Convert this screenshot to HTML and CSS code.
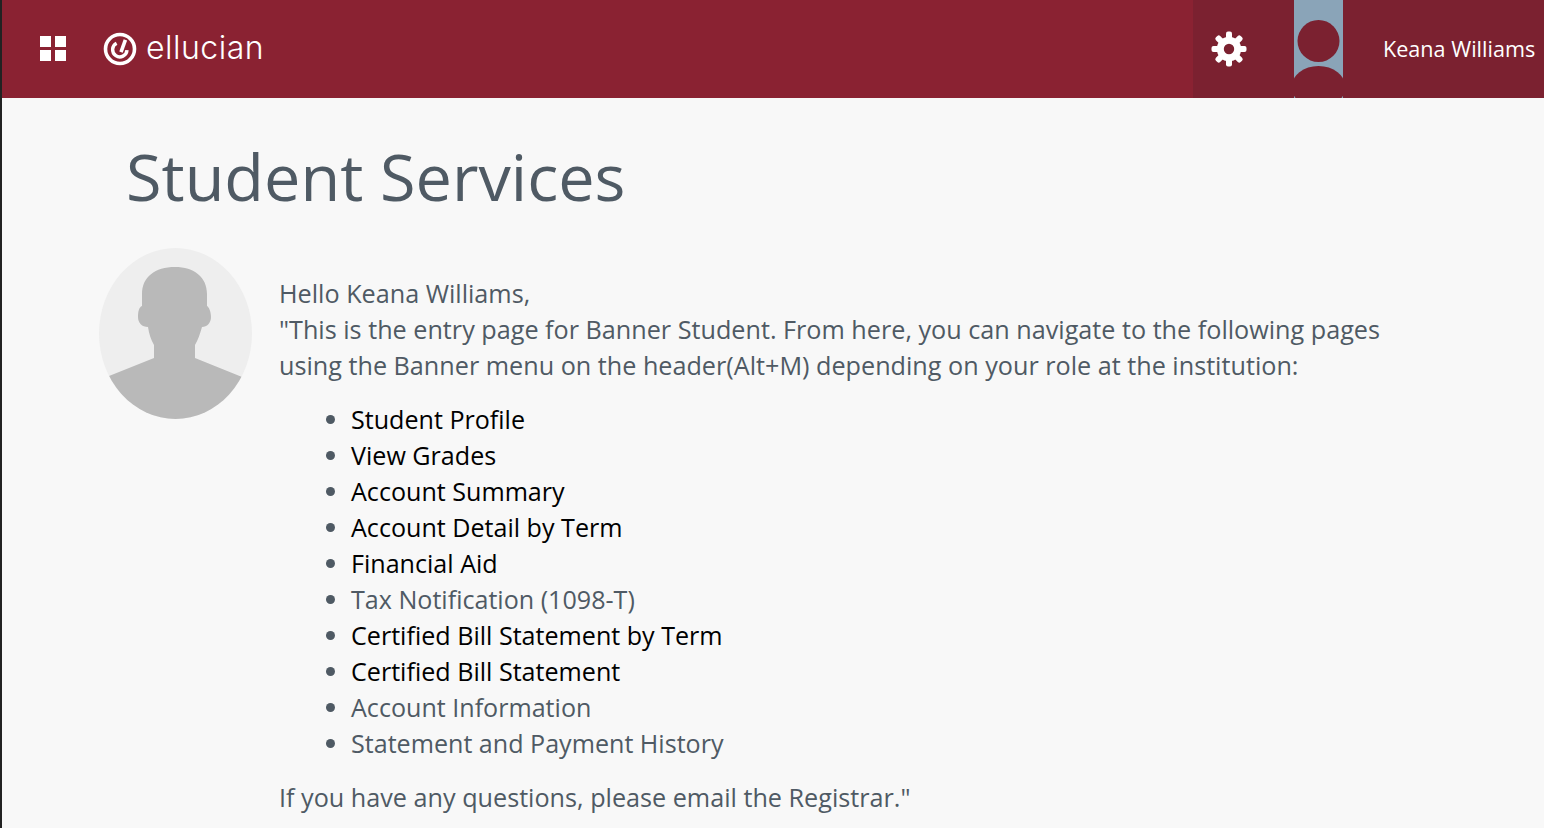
FILE: index.html
```html
<!DOCTYPE html>
<html lang="en">
<head>
    <meta charset="UTF-8" />
    <title>Student Services</title>
    <link rel="stylesheet" href="styles.css">
</head>
<body>
<header class="topbar">
    <div class="topbar-left">
        <svg class="menu-icon" viewBox="0 0 26 26" width="26" height="26">
            <rect x="0" y="0" width="11" height="11" />
            <rect x="15" y="0" width="11" height="11" />
            <rect x="0" y="14" width="11" height="11" />
            <rect x="15" y="14" width="11" height="11" />
        </svg>
        <div class="logo">
            <svg class="logo-mark" viewBox="0 0 34 34" width="34" height="34">
                <circle cx="17" cy="17" r="14.5" fill="none" stroke="#fff" stroke-width="3.6" />
                <path d="M13.6 11.2a7.2 7.2 0 1 0 10.4 7" fill="none" stroke="#fff" stroke-width="3.4" />
                <path d="M22.4 7.8l-4.4 12.4" fill="none" stroke="#fff" stroke-width="3.6" />
            </svg>
            <span class="logo-text">ellucian</span>
        </div>
    </div>
    <div class="topbar-right">
        <button class="gear-btn" aria-label="Settings">
            <svg class="gear" viewBox="0 0 36 36" width="36" height="36">
                <circle class="gear-ring" cx="18" cy="18" r="8.7" />
                <rect x="15" y="0.5" width="6" height="9" rx="2" />
                <rect x="15" y="0.5" width="6" height="9" rx="2" transform="rotate(45 18 18)" />
                <rect x="15" y="0.5" width="6" height="9" rx="2" transform="rotate(90 18 18)" />
                <rect x="15" y="0.5" width="6" height="9" rx="2" transform="rotate(135 18 18)" />
                <rect x="15" y="0.5" width="6" height="9" rx="2" transform="rotate(180 18 18)" />
                <rect x="15" y="0.5" width="6" height="9" rx="2" transform="rotate(225 18 18)" />
                <rect x="15" y="0.5" width="6" height="9" rx="2" transform="rotate(270 18 18)" />
                <rect x="15" y="0.5" width="6" height="9" rx="2" transform="rotate(315 18 18)" />
            </svg>
        </button>
        <svg class="user-tile" viewBox="0 0 49 98" width="49" height="98">
            <rect width="49" height="98" fill="#8aa4b8" />
            <circle cx="24.5" cy="41" r="21" fill="#7b2130" />
            <ellipse cx="24.5" cy="87" rx="27" ry="21" fill="#7b2130" />
        </svg>
        <span class="user-name">Keana Williams</span>
    </div>
</header>

<main class="page">
    <h1>Student Services</h1>
    <div class="welcome">
        <svg class="profile-pic" viewBox="0 0 153 171" width="153" height="171">
            <defs>
                <clipPath id="pic-clip">
                    <ellipse cx="76.5" cy="85.5" rx="76.5" ry="85.5" />
                </clipPath>
            </defs>
            <ellipse cx="76.5" cy="85.5" rx="76.5" ry="85.5" fill="#eeeeee" />
            <path clip-path="url(#pic-clip)" fill="#b9b9b9" d="M76 19C56 19 43 29 43 46V58C40 59 39 64 39 69C39 75 43 79 49 79C50 86 52 92 55 97V110L0 132V175H153V133L96 110V97C99 92 101 86 103 79C108 79 112 75 112 69C112 64 110 59 108 58V46C108 29 95 19 76 19Z" />
        </svg>
        <div class="welcome-text">
            <p>Hello Keana Williams,<br>"This is the entry page for Banner Student. From here, you can navigate to the following pages using the Banner menu on the header(Alt+M) depending on your role at the institution:</p>
            <ul>
                <li><a href="#">Student Profile</a></li>
                <li><a href="#">View Grades</a></li>
                <li><a href="#">Account Summary</a></li>
                <li><a href="#">Account Detail by Term</a></li>
                <li><a href="#">Financial Aid</a></li>
                <li>Tax Notification (1098-T)</li>
                <li><a href="#">Certified Bill Statement by Term</a></li>
                <li><a href="#">Certified Bill Statement</a></li>
                <li>Account Information</li>
                <li>Statement and Payment History</li>
            </ul>
            <p>If you have any questions, please email the Registrar."</p>
        </div>
    </div>
</main>
</body>
</html>
```

FILE: styles.css
```css
:root {
    --cor-header: #8a2232;
    --cor-header-escuro: #7b2130;
    --cor-texto: #4f5a64;
    --cor-fundo: #f8f8f8;
}

html, body {
    height: 100%;
    margin: 0;
    overflow: hidden;
}

body {
    box-sizing: border-box;
    border-left: 2px solid #222;
    background: var(--cor-fundo);
    color: var(--cor-texto);
    font-family: "Open Sans", sans-serif;
}

.topbar {
    display: flex;
    justify-content: space-between;
    height: 98px;
    background: var(--cor-header);
    color: #fff;
}

.topbar-left {
    display: flex;
    align-items: center;
    padding-left: 38px;
}

.menu-icon {
    fill: #fff;
    margin-right: 37px;
}

.logo {
    display: flex;
    align-items: center;
}

.logo-mark {
    margin-right: 9px;
}

.logo-text {
    margin-bottom: 3px;
    font-family: "Inter", sans-serif;
    font-size: 32px;
    font-weight: 300;
    letter-spacing: 0.5px;
}

.topbar-right {
    display: flex;
    align-items: center;
    width: 351px;
    background: var(--cor-header-escuro);
}

.gear-btn {
    display: flex;
    align-items: center;
    justify-content: center;
    width: 72px;
    height: 98px;
    margin-right: 29px;
    padding: 0;
    border: none;
    background: transparent;
    fill: #fff;
}

.gear-ring {
    fill: none;
    stroke: #fff;
    stroke-width: 7;
}

.user-tile {
    display: block;
}

.user-name {
    margin-left: 40px;
    margin-bottom: 2px;
    font-size: 21.6px;
    white-space: nowrap;
}

.page {
    padding: 38px 112px 0 97px;
}

h1 {
    margin: 0 0 32px 27px;
    font-size: 64.8px;
    font-weight: 400;
    line-height: 80px;
}

.welcome {
    display: flex;
    align-items: flex-start;
}

.profile-pic {
    flex: none;
    margin-right: 27px;
}

.welcome-text {
    padding-top: 27px;
    font-size: 25.2px;
    line-height: 36px;
}

.welcome-text p {
    margin: 0;
}

.welcome-text ul {
    margin: 18px 0;
    padding-left: 72px;
    font-size: 25.1px;
}

.welcome-text a {
    color: #000;
    text-decoration: none;
}
```
